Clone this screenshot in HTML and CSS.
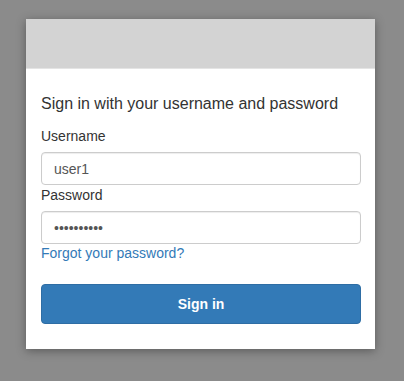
FILE: index.html
```html
<!DOCTYPE html>
<html lang="en">
<head>
<meta charset="utf-8">
<title>Sign in</title>
<link rel="stylesheet" href="styles.css">
</head>
<body>
<div class="card">
  <div class="card-header"></div>
  <form class="card-body">
    <h1 class="title">Sign in with your username and password</h1>
    <label class="label" for="username">Username</label>
    <input class="field" id="username" type="text" value="user1">
    <label class="label" for="password">Password</label>
    <input class="field" id="password" type="password" value="abcdefghij">
    <a class="forgot" href="#">Forgot your password?</a>
    <button class="submit" type="button">Sign in</button>
  </form>
</div>
</body>
</html>
```
FILE: styles.css
```css
html, body {
  margin: 0;
  padding: 0;
}
body {
  background: #8b8b8b;
  font-family: "Liberation Sans", Arial, sans-serif;
  color: #333;
  padding: 19px 0 0 26px;
  height: 381px;
  box-sizing: border-box;
}
.card {
  width: 349px;
  background: #fff;
  box-shadow: 0 2px 9px rgba(0, 0, 0, 0.35);
}
.card-header {
  height: 49px;
  background: #d3d3d3;
  border-bottom: 1px solid #e4e4e4;
}
.card-body {
  display: flex;
  flex-direction: column;
  align-items: flex-start;
  padding: 24px 15px 25px 15px;
  margin: 0;
}
.title {
  margin: 0 0 11px 0;
  font-size: 16px;
  line-height: 22px;
  font-weight: normal;
  color: #333;
}
.label {
  font-size: 14px;
  line-height: 20px;
  margin-bottom: 6px;
  color: #333;
}
.field {
  box-sizing: border-box;
  width: 320px;
  height: 33px;
  margin: 0;
  padding: 6px 12px;
  border: 1px solid #ccc;
  border-radius: 4px;
  box-shadow: inset 0 1px 1px rgba(0, 0, 0, 0.075);
  font-family: "Liberation Sans", Arial, sans-serif;
  font-size: 14px;
  color: #555;
  background: #fff;
  outline: none;
}
.forgot {
  font-size: 14px;
  line-height: 18px;
  color: #337ab7;
  text-decoration: none;
}
.submit {
  margin-top: 22px;
  width: 320px;
  height: 40px;
  border: 1px solid #2e6da4;
  border-radius: 4px;
  background: #337ab7;
  color: #fff;
  font-family: "Liberation Sans", Arial, sans-serif;
  font-size: 14px;
  font-weight: bold;
  cursor: pointer;
}
```
